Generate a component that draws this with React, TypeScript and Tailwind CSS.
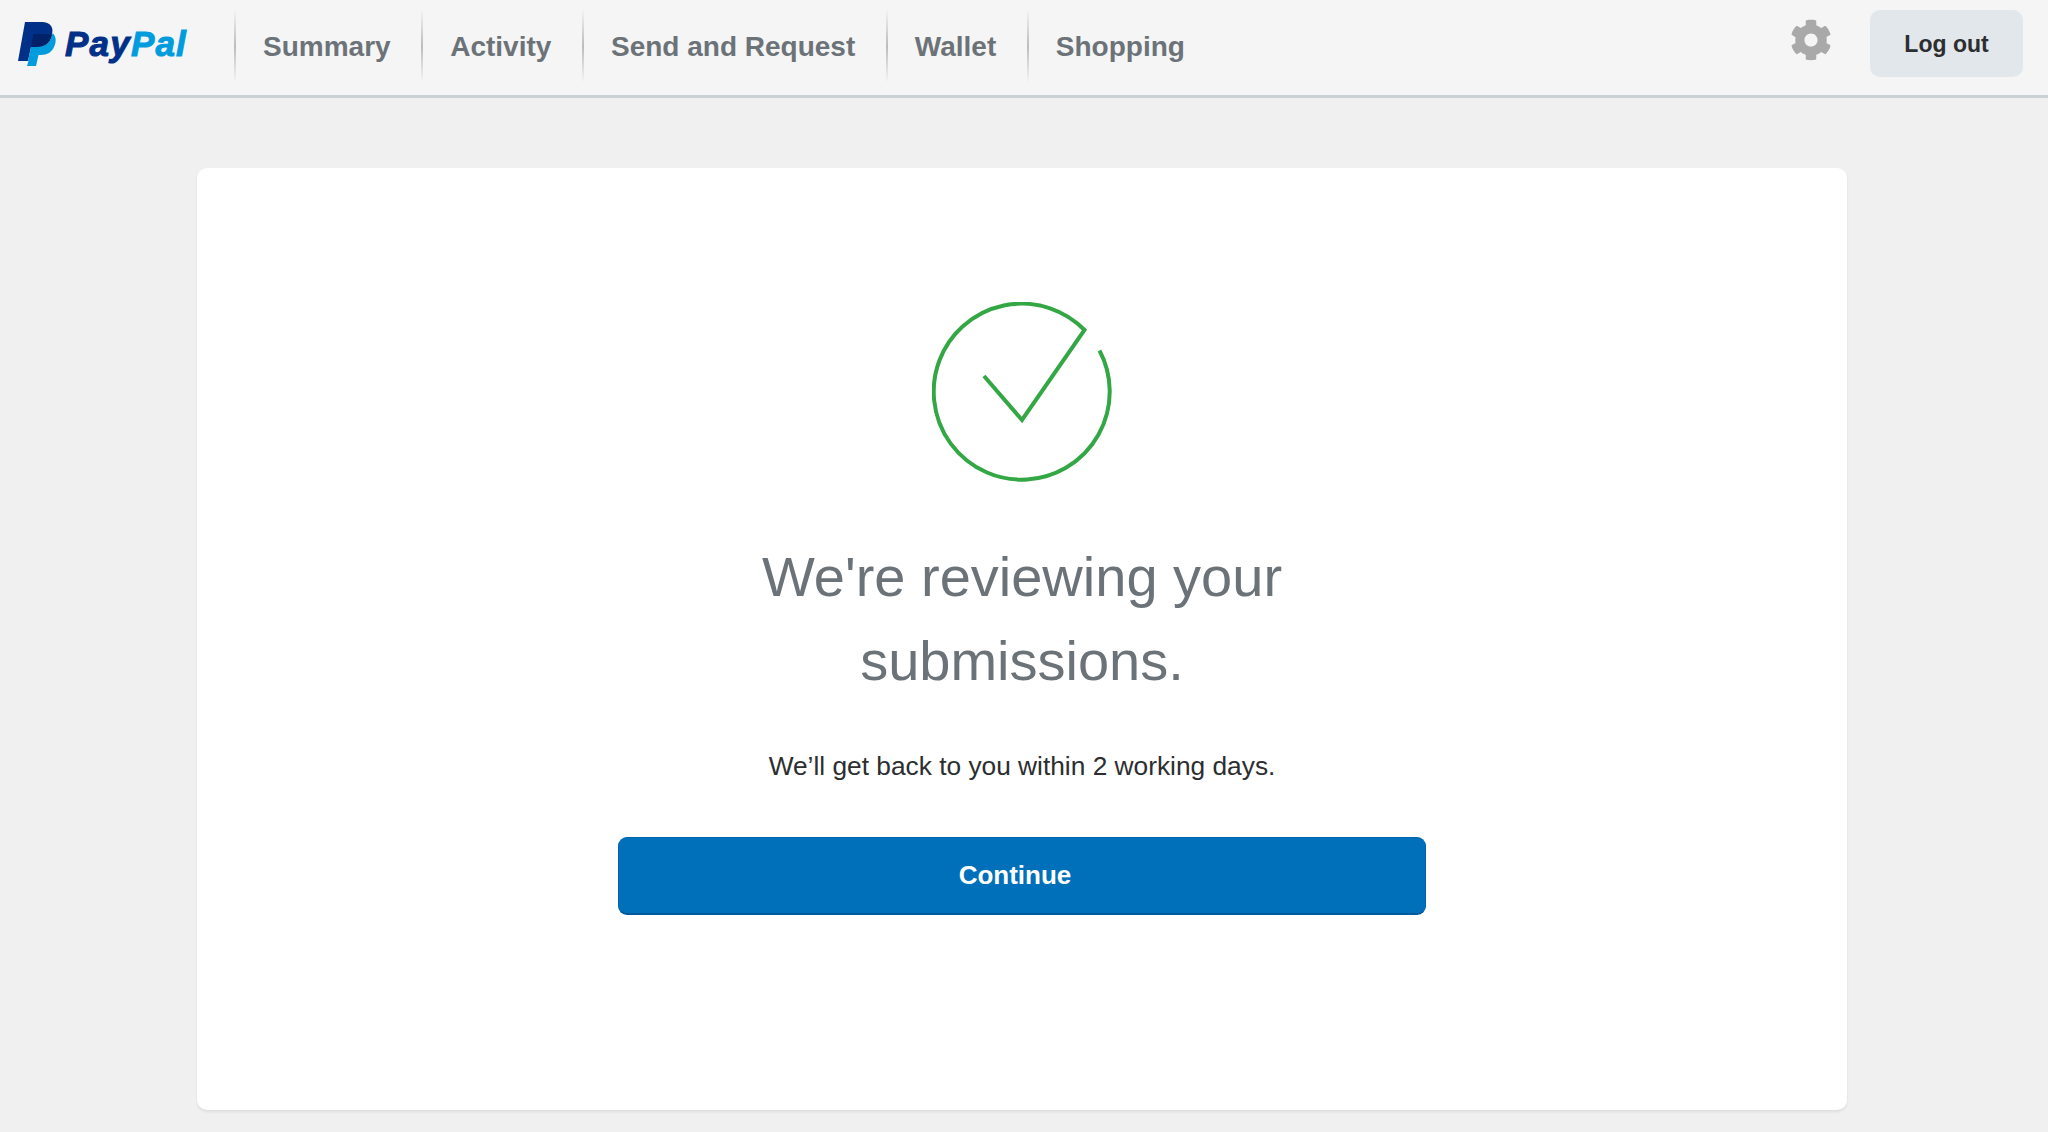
import { FaCog } from "react-icons/fa";

const navItems = ["Summary", "Activity", "Send and Request", "Wallet", "Shopping"];

function Logo() {
  return (
    <div className="flex items-center w-[234px] h-full pl-[18px]">
      <svg width="40" height="46" viewBox="18 20 40 46" className="shrink-0 mt-[-4px]">
        <path d="M25 21H42C50 21 54 26 52 33C50 43 44 46 36 46H31L28 60H18Z" fill="#003087" />
        <path d="M52.5 32C57 36 56 42 54 46C52 51 47 54 41 54H38.5L36 65H27L28.5 60H28L31 46H36C44 46 50 43 52 34Z" fill="#009cde" />
        <path d="M33.5 33H47C49 33 51 33.5 52 34C50 43 44 46 36 46H31Z" fill="#012169" />
      </svg>
      <span className="ml-[7px] mt-[-5px] text-[35px] leading-none font-bold italic tracking-[1.2px] text-[#003087] [-webkit-text-stroke:1px_#003087]">
        Pay<span className="text-[#009cde] [-webkit-text-stroke:1px_#009cde]">Pal</span>
      </span>
    </div>
  );
}

function NavItem({ label }: { label: string }) {
  return (
    <div className="flex items-center h-full">
      <span className="w-[2px] h-[74px] bg-gradient-to-b from-transparent via-[#b9bdc0] to-transparent" />
      <a className="pl-[27px] pr-[30.6px] pt-[1px] text-[28px] font-bold text-[#6c7378]">{label}</a>
    </div>
  );
}

function CheckMark() {
  return (
    <svg width="180" height="180" viewBox="0 0 180 180" fill="none" stroke="#34a745" strokeWidth="4">
      <path d="M167.5 48.5A88 88 0 1 1 152.5 28L90 118L52 74" strokeLinejoin="miter" />
    </svg>
  );
}

export default function App() {
  return (
    <div className="min-h-[1132px] bg-[#f0f0f0] [font-family:'Liberation_Sans',sans-serif]">
      <header className="flex items-center h-[98px] pb-[3px] bg-[#f5f5f5] border-b-[3px] border-[#cbd2d6]">
        <Logo />
        <nav className="flex items-center h-full">
          {navItems.map((item) => (
            <NavItem key={item} label={item} />
          ))}
        </nav>
        <div className="ml-auto self-start mt-[10px] flex items-center gap-[38px] pr-[25px]">
          <FaCog className="text-[42px] text-[#a9a9a9] mt-[-8px]" />
          <button className="w-[153px] h-[67px] pt-[2px] rounded-[10px] bg-[#e1e7eb] text-[23px] font-bold text-[#2c2e2f]">
            Log out
          </button>
        </div>
      </header>

      <main className="pt-[70px] pl-[197px] pr-[201px] pb-[22px]">
        <div className="flex flex-col items-center h-[942px] pt-[134px] bg-white rounded-[10px] shadow-[0_2px_3px_rgba(0,0,0,0.08)]">
          <CheckMark />
          <h1 className="mt-[53px] w-[640px] text-center text-[56px] leading-[84px] font-normal text-[#6c7378]">
            We're reviewing your submissions.
          </h1>
          <p className="mt-[45px] text-[26.3px] leading-[36px] text-[#2c2e2f]">
            We’ll get back to you within 2 working days.
          </p>
          <button className="mt-[53px] w-[808px] h-[78px] pr-[14px] rounded-[9px] bg-[#0070ba] border border-[#0066ab] border-b-2 border-b-[#005a9b] text-[26px] font-bold text-white">
            Continue
          </button>
        </div>
      </main>
    </div>
  );
}
